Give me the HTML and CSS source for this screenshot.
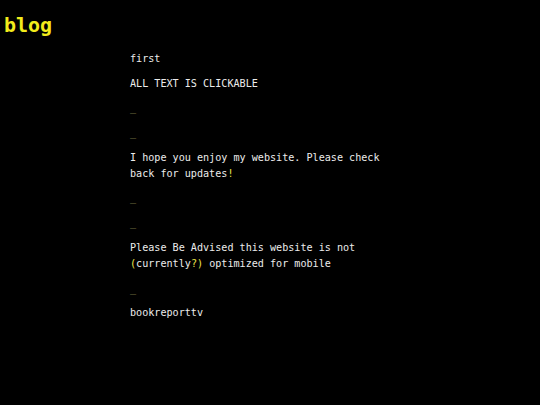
FILE: index.html
```html
<!DOCTYPE html>
<html>
<head>
<meta charset="utf-8">
<link rel="stylesheet" href="styles.css">
</head>
<body>
<header class="top">
  <a class="logo" href="#">blog</a>
</header>
<main class="feed">
  <p class="post">first</p>
  <p class="post">ALL TEXT IS CLICKABLE</p>
  <p class="post sep">_</p>
  <p class="post sep">_</p>
  <p class="post">I hope you enjoy my website. Please check<br>back for updates<span class="hl">!</span></p>
  <p class="post sep">_</p>
  <p class="post sep">_</p>
  <p class="post">Please Be Advised this website is not<br><span class="hl">(</span>currently<span class="hl">?)</span> optimized for mobile</p>
  <p class="post sep">_</p>
  <p class="post">bookreporttv</p>
</main>
</body>
</html>
```
FILE: styles.css
```css
html, body {
  margin: 0;
  padding: 0;
  background: #000;
}
body {
  font-family: "DejaVu Sans Mono", monospace;
  color: #ececec;
  width: 540px;
  height: 405px;
  overflow: hidden;
}
.top {
  padding: 12px 0 0 4px;
  height: 39px;
}
.logo {
  font-size: 20px;
  font-weight: bold;
  line-height: 26px;
  color: #f2ec1c;
  text-decoration: none;
  display: block;
}
.feed {
  padding-left: 130px;
  display: flex;
  flex-direction: column;
  gap: 8.7px;
}
.post {
  margin: 0;
  font-size: 10.12px;
  line-height: 16px;
}
.sep {
  color: #8c8a4e;
}
.hl {
  color: #ece44a;
}
```
